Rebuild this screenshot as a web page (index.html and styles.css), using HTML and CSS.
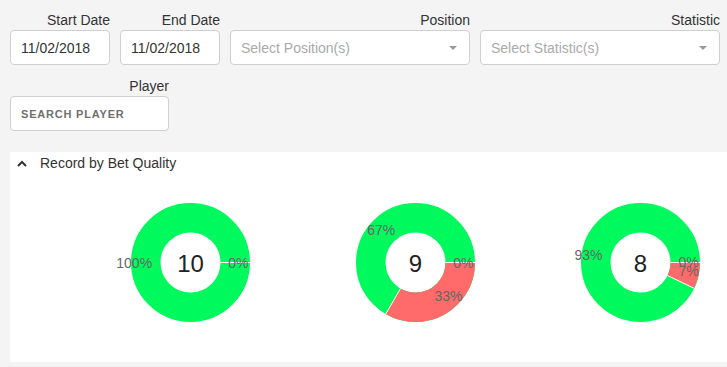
FILE: index.html
```html
<!DOCTYPE html>
<html lang="en">
<head>
    <meta charset="UTF-8">
    <meta name="viewport" content="width=device-width, initial-scale=1.0">
    <title>Bet Quality</title>
    <link rel="stylesheet" href="styles.css">
</head>
<body>
    <!-- Filters -->
    <div class="filters">
        <div class="row">
            <div class="field date">
                <label for="startDate">Start Date</label>
                <input type="text" id="startDate" value="11/02/2018">
            </div>
            <div class="field date">
                <label for="endDate">End Date</label>
                <input type="text" id="endDate" value="11/02/2018">
            </div>
            <div class="field select">
                <label>Position</label>
                <div class="select-box">
                    <span class="placeholder">Select Position(s)</span>
                    <span class="arrow"></span>
                </div>
            </div>
            <div class="field select">
                <label>Statistic</label>
                <div class="select-box">
                    <span class="placeholder">Select Statistic(s)</span>
                    <span class="arrow"></span>
                </div>
            </div>
        </div>
        <div class="row">
            <div class="field player">
                <label for="player">Player</label>
                <input type="text" id="player" class="search" placeholder="SEARCH PLAYER">
            </div>
        </div>
    </div>

    <!-- Record by Bet Quality -->
    <section class="panel">
        <div class="panel-head">
            <svg class="chevron" width="10" height="7" viewBox="0 0 10 7">
                <polyline points="1,6 5,2 9,6" fill="none" stroke="#333" stroke-width="2"/>
            </svg>
            <span>Record by Bet Quality</span>
        </div>
        <div class="charts">
            <div class="chart">
                <svg width="225" height="178" viewBox="-112.5 -88.5 225 178">
                    <circle r="44.75" class="ring green"/>
                    <line x1="30" y1="0" x2="59.5" y2="0" class="sep"/>
                    <text x="-56.3" y="5.5" class="pct">100%</text>
                    <text x="47.8" y="5.5" class="pct">0%</text>
                    <text x="0" y="9" class="total">10</text>
                </svg>
            </div>
            <div class="chart">
                <svg width="225" height="178" viewBox="-112.5 -88.5 225 178">
                    <circle r="44.75" class="ring green"/>
                    <circle r="44.75" class="ring red" stroke-dasharray="93.72 281.17"/>
                    <line x1="30" y1="0" x2="59.5" y2="0" class="sep"/>
                    <line x1="-15" y1="25.98" x2="-29.75" y2="51.53" class="sep"/>
                    <text x="-34.3" y="-27.5" class="pct">67%</text>
                    <text x="47.8" y="5.5" class="pct">0%</text>
                    <text x="33" y="38.5" class="pct">33%</text>
                    <text x="0" y="9" class="total">9</text>
                </svg>
            </div>
            <div class="chart">
                <svg width="225" height="178" viewBox="-112.5 -88.5 225 178">
                    <circle r="44.75" class="ring green"/>
                    <circle r="44.75" class="ring red" stroke-dasharray="20.08 281.17"/>
                    <line x1="30" y1="0" x2="59.5" y2="0" class="sep"/>
                    <line x1="27.03" y1="13.02" x2="53.61" y2="25.82" class="sep"/>
                    <text x="-52" y="-3" class="pct">93%</text>
                    <text x="48" y="4" class="pct">0%</text>
                    <text x="48" y="13.5" class="pct">7%</text>
                    <text x="0" y="9" class="total">8</text>
                </svg>
            </div>
        </div>
    </section>
</body>
</html>
```

FILE: styles.css
```css
/* Global Styles */
body {
    font-family: 'Liberation Sans', Arial, sans-serif;
    background-color: #f4f4f4;
    color: #333;
    margin: 0;
    padding: 10px 0 0 10px;
    overflow: hidden;
}

/* Filters */
.row {
    display: flex;
    gap: 10px;
    margin-bottom: 11px;
}

.field label {
    display: block;
    text-align: right;
    font-size: 14px;
    line-height: 20px;
    color: #333;
}

.field input,
.select-box {
    box-sizing: border-box;
    height: 35px;
    width: 100%;
    border: 1px solid #cfcfcf;
    border-radius: 4px;
    background: #fff;
    font-family: inherit;
    font-size: 14px;
    color: #333;
    padding: 0 10px;
    margin: 0;
    outline: none;
}

.date {
    width: 100px;
}

.select {
    width: 240px;
}

.player {
    width: 159px;
}

.select-box {
    display: flex;
    align-items: center;
    justify-content: space-between;
    padding-right: 12px;
}

.placeholder {
    color: #aaa;
}

.arrow {
    width: 0;
    height: 0;
    border-style: solid;
    border-width: 4px 4px 0;
    border-color: #999 transparent transparent;
}

.search {
    font-size: 11px !important;
    font-weight: bold;
    letter-spacing: 0.8px;
}

.search::placeholder {
    color: #6f6f6f;
}

/* Panel */
.panel {
    background: #fff;
    margin-top: 21px;
    padding-bottom: 10px;
}

.panel-head {
    display: flex;
    align-items: center;
    height: 22px;
    padding-left: 7px;
    font-size: 14px;
    color: #333;
}

.chevron {
    margin-right: 13px;
}

.charts {
    display: flex;
    padding-left: 68px;
}

.chart {
    width: 225px;
}

.chart svg {
    display: block;
    overflow: visible;
}

.ring {
    fill: none;
    stroke-width: 29.5;
}

.green {
    stroke: #00f95c;
}

.red {
    stroke: #ff6a6a;
}

.sep {
    stroke: #fff;
    stroke-width: 1;
}

.pct {
    font-size: 14px;
    fill: #666;
    text-anchor: middle;
}

.total {
    font-size: 24px;
    fill: #222;
    text-anchor: middle;
}
```
